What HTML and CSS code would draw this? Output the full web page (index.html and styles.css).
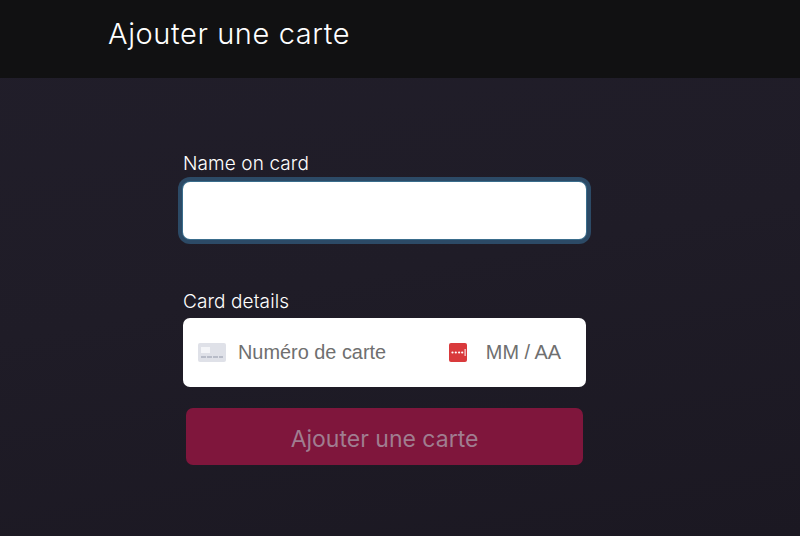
FILE: index.html
```html
<!DOCTYPE html>
<html lang="fr">

<head>
    <meta charset="UTF-8">
    <title>Ajouter une carte</title>
    <link rel="stylesheet" href="styles.css">
</head>

<body>

    <header>
        <h1>Ajouter une carte</h1>
    </header>

    <form class="form">
        <label class="label">Name on card</label>
        <div class="nameInput"></div>

        <label class="label label2">Card details</label>
        <div class="cardBox">
            <svg class="cardIcon" width="28" height="19" viewBox="0 0 28 19">
                <rect width="28" height="19" rx="2" fill="#dfe1e8" />
                <rect x="3" y="4" width="9" height="6" fill="#f4f5f8" />
                <rect x="3" y="13" width="5" height="2" fill="#b8bcc8" />
                <rect x="9" y="13" width="5" height="2" fill="#b8bcc8" />
                <rect x="15" y="13" width="5" height="2" fill="#b8bcc8" />
                <rect x="21" y="13" width="4" height="2" fill="#b8bcc8" />
            </svg>
            <span class="number">Numéro de carte</span>
            <svg class="cvcIcon" width="18" height="19" viewBox="0 0 18 19">
                <rect width="18" height="19" rx="2" fill="#d93a3c" />
                <circle cx="3.5" cy="9.5" r="1.1" fill="#fff" />
                <circle cx="6.8" cy="9.5" r="1.1" fill="#fff" />
                <circle cx="10.1" cy="9.5" r="1.1" fill="#fff" />
                <circle cx="13.2" cy="9.5" r="1.1" fill="#fff" />
                <rect x="15.6" y="6" width="1" height="7" fill="#fff" />
            </svg>
            <span class="date">MM / AA</span>
        </div>

        <button class="submit" type="button">Ajouter une carte</button>
    </form>

</body>

</html>
```

FILE: styles.css
```css
* {
    padding: 0;
    margin: 0;
    box-sizing: border-box;
}

html,
body {
    height: 100%;
}

body {
    background: linear-gradient(170deg, #211e2a 0%, #1f1c27 50%, #1b1822 100%);
    font-family: Inter, "Liberation Sans", sans-serif;
    overflow: hidden;
}

header {
    height: 78px;
    background: #111112;
    padding: 16px 0 0 108px;
}

header h1 {
    color: #fff;
    font-size: 29px;
    font-weight: 300;
    line-height: 36px;
    letter-spacing: 0.6px;
}

.form {
    width: 403px;
    margin: 75px 0 0 183px;
}

.label {
    display: block;
    color: #fff;
    font-size: 19px;
    font-weight: 300;
    line-height: 22px;
    margin-bottom: 7px;
    letter-spacing: 0.1px;
}

.label2 {
    margin-top: 52px;
    margin-bottom: 5px;
}

.nameInput {
    height: 57px;
    background: #fff;
    border-radius: 7px;
    box-shadow: 0 0 0 1px #3a6d8c, 0 0 0 5px #2c4a66;
}

.cardBox {
    height: 69px;
    background: #fff;
    border-radius: 7px;
    padding: 0 25px 0 15px;
    display: flex;
    align-items: center;
    font-family: "Liberation Sans", Arial, sans-serif;
    font-size: 19.9px;
    color: #6f6f6f;
}

.cardIcon {
    margin-right: 12px;
}

.number {
    flex: 1;
}

.cvcIcon {
    margin-right: 19px;
}

.submit {
    display: block;
    width: 397px;
    height: 57px;
    margin: 21px 0 0 3px;
    padding-top: 5px;
    border: 0;
    border-radius: 7px;
    background: #7f163c;
    color: #a07d90;
    font-family: Inter, "Liberation Sans", sans-serif;
    font-size: 23px;
    font-weight: 400;
}
```
